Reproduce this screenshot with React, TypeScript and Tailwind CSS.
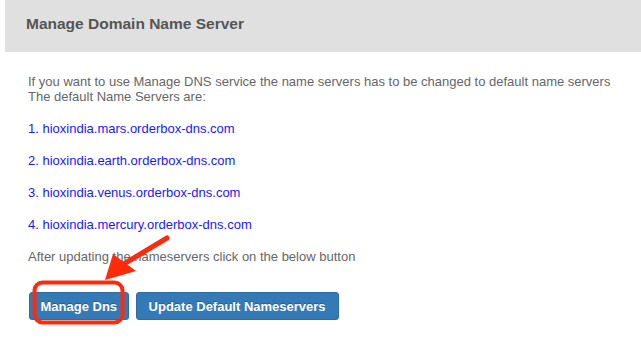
import React from "react";

export default function App() {
  const links = [
    "1. hioxindia.mars.orderbox-dns.com",
    "2. hioxindia.earth.orderbox-dns.com",
    "3. hioxindia.venus.orderbox-dns.com",
    "4. hioxindia.mercury.orderbox-dns.com",
  ];
  return (
    <div
      className="relative w-[641px] h-[339px] bg-white overflow-hidden"
      style={{ fontFamily: '"Liberation Sans", Arial, sans-serif' }}
    >
      <div className="pl-[5px]">
        <div className="h-[52px] bg-[#dfe0df] pl-[21px] pt-[15px]">
          <h1 className="text-[15.5px] leading-[18px] font-bold text-[#555555]">
            Manage Domain Name Server
          </h1>
        </div>
        <div className="pl-[23px] text-[13px] leading-[15px] text-[#666666]">
          <p className="mt-[22px]">
            If you want to use Manage DNS service the name servers has to be changed to default name servers
            <br />
            The default Name Servers are:
          </p>
          <div className="mt-[17px] flex flex-col gap-[17px]">
            {links.map((l) => (
              <a key={l} className="block text-[#1a1aee] leading-[15px]" href="#">
                {l}
              </a>
            ))}
          </div>
          <p className="mt-[17px]">After updating the nameservers click on the below button</p>
          <div className="mt-[28px] flex gap-[7px] pl-[1px]">
            <button className="h-[28px] px-[10.5px] bg-[#337ab7] border border-[#2e6da4] rounded-[3px] text-white text-[13px] font-bold [text-shadow:0_-1px_0_rgba(0,0,0,0.25)]">
              Manage Dns
            </button>
            <button className="h-[28px] px-[12px] bg-[#337ab7] border border-[#2e6da4] rounded-[3px] text-white text-[13px] font-bold [text-shadow:0_-1px_0_rgba(0,0,0,0.25)]">
              Update Default Nameservers
            </button>
          </div>
        </div>
      </div>
      <svg
        className="absolute inset-0 pointer-events-none"
        width="641"
        height="339"
        viewBox="0 0 641 339"
      >
        <rect
          x="34.5"
          y="282.5"
          width="88"
          height="40"
          rx="8"
          fill="none"
          stroke="#ff2a0a"
          strokeWidth="4"
        />
        <line x1="167" y1="238" x2="122" y2="265" stroke="#ff2a0a" strokeWidth="5" strokeLinecap="round" />
        <polygon points="105,280 113,254 136,271" fill="#ff2a0a" />
      </svg>
    </div>
  );
}
